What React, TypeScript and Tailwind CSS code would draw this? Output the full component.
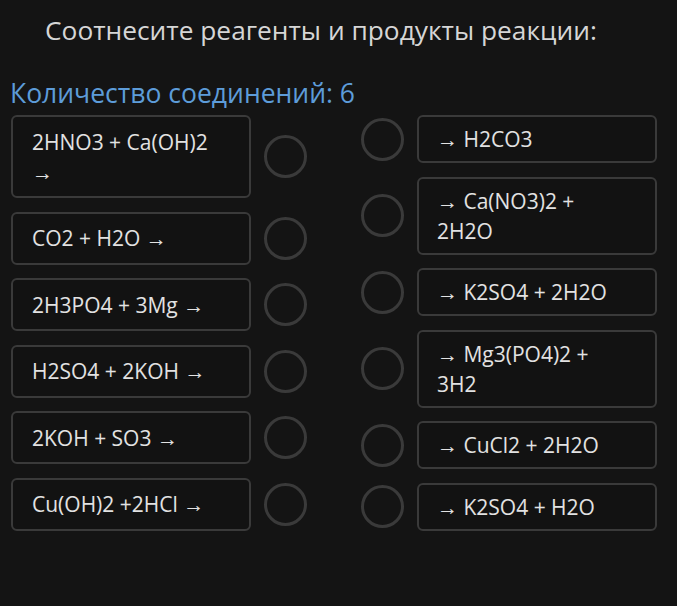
const reagents = [
  "2HNO3 + Ca(OH)2\n→",
  "CO2 + H2O →",
  "2H3PO4 + 3Mg →",
  "H2SO4 + 2KOH →",
  "2KOH + SO3 →",
  "Cu(OH)2 +2HCl →",
];

const products = [
  "→ H2CO3",
  "→ Ca(NO3)2 +\n2H2O",
  "→ K2SO4 + 2H2O",
  "→ Mg3(PO4)2 +\n3H2",
  "→ CuCl2 + 2H2O",
  "→ K2SO4 + H2O",
];

function Radio() {
  return <div className="w-[43px] h-[43px] shrink-0 rounded-full border-[3px] border-[#3a3a3a]" />;
}

export default function App() {
  return (
    <div className="w-full min-h-screen bg-[#141414] font-['Open_Sans',sans-serif]">
      <h1 className="pl-[45px] pt-[10px] text-[26.3px] leading-[40px] text-[#d6d6d6]">
        Соотнесите реагенты и продукты реакции:
      </h1>
      <p className="pl-[10px] mt-[26px] text-[26.5px] leading-[34px] text-[#5d9cd9]">
        Количество соединений: 6
      </p>

      <div className="flex mt-[5px] pl-[11px] gap-[54px]">
        <div className="flex flex-col gap-[13.5px]">
          {reagents.map((r) => (
            <div key={r} className="flex items-center gap-[13px]">
              <div className="w-[240px] rounded-md border-2 border-[#3a3a3a] bg-[#121212] px-[19px] py-[9.5px] text-[21px] leading-[30px] text-[#e2e2e2] whitespace-pre-line">
                {r}
              </div>
              <Radio />
            </div>
          ))}
        </div>

        <div className="flex flex-col gap-[13.5px]">
          {products.map((p) => (
            <div key={p} className="flex items-center gap-[13px]">
              <Radio />
              <div className="w-[240px] rounded-md border-2 border-[#3a3a3a] bg-[#121212] px-[18px] py-[7px] text-[21px] leading-[30px] text-[#e2e2e2] whitespace-pre-line">
                {p}
              </div>
            </div>
          ))}
        </div>
      </div>
    </div>
  );
}
